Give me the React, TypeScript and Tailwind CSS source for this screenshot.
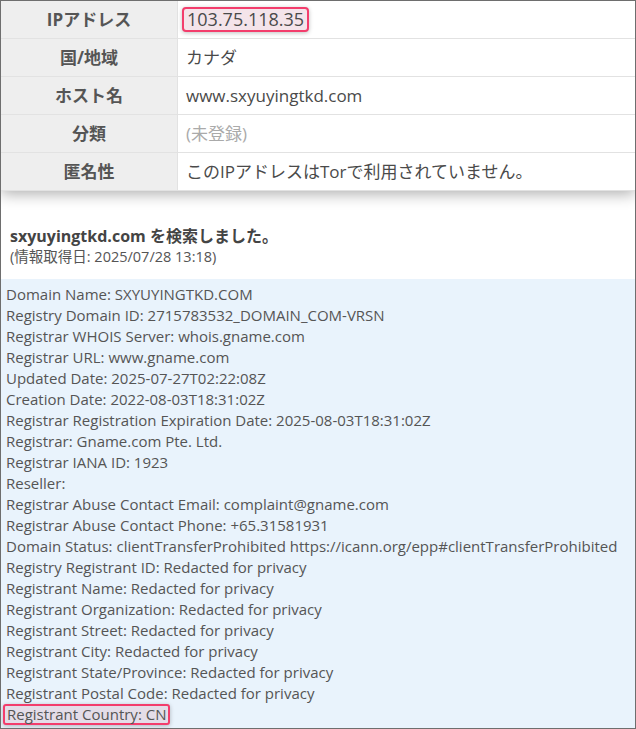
import React from "react";

const rows = [
  { label: "IPアドレス", value: "103.75.118.35", mark: true },
  { label: "国/地域", value: "カナダ" },
  { label: "ホスト名", value: "www.sxyuyingtkd.com" },
  { label: "分類", value: "(未登録)", muted: true },
  { label: "匿名性", value: "このIPアドレスはTorで利用されていません。" },
];

const whois = [
  "Domain Name: SXYUYINGTKD.COM",
  "Registry Domain ID: 2715783532_DOMAIN_COM-VRSN",
  "Registrar WHOIS Server: whois.gname.com",
  "Registrar URL: www.gname.com",
  "Updated Date: 2025-07-27T02:22:08Z",
  "Creation Date: 2022-08-03T18:31:02Z",
  "Registrar Registration Expiration Date: 2025-08-03T18:31:02Z",
  "Registrar: Gname.com Pte. Ltd.",
  "Registrar IANA ID: 1923",
  "Reseller:",
  "Registrar Abuse Contact Email: complaint@gname.com",
  "Registrar Abuse Contact Phone: +65.31581931",
  "Domain Status: clientTransferProhibited https://icann.org/epp#clientTransferProhibited",
  "Registry Registrant ID: Redacted for privacy",
  "Registrant Name: Redacted for privacy",
  "Registrant Organization: Redacted for privacy",
  "Registrant Street: Redacted for privacy",
  "Registrant City: Redacted for privacy",
  "Registrant State/Province: Redacted for privacy",
  "Registrant Postal Code: Redacted for privacy",
];

const font = "font-['Open_Sans','Noto_Sans_CJK_JP',sans-serif]";

export default function App() {
  return (
    <div className={`w-[636px] h-[729px] flex flex-col overflow-hidden border border-[#6e6e6e] bg-white text-[#4a4a4a] ${font}`}>
      {/* ── IP info table ── */}
      <div className="relative z-10 shrink-0 bg-white shadow-[0_3px_14px_rgba(0,0,0,0.32)]">
        {rows.map((r) => (
          <div key={r.label} className="flex h-[38px] border-b border-[#e2e2e2]">
            <div className="w-[177px] shrink-0 flex items-center justify-center bg-[#eeeeee] border-r border-[#e2e2e2] text-[17px] font-bold text-[#555]">
              {r.label}
            </div>
            <div className="flex items-center pl-[8px] text-[17px]">
              {r.mark ? (
                <span className="px-[3px] h-[25px] flex items-center rounded-[4px] border-2 border-[#f33d6c] bg-[#f4e4ea] text-[18px] shadow-[0_1px_4px_rgba(0,0,0,0.25)] -ml-[4px]">
                  {r.value}
                </span>
              ) : (
                <span className={r.muted ? "text-[#aaaaaa]" : ""}>{r.value}</span>
              )}
            </div>
          </div>
        ))}
      </div>

      {/* ── Search result ── */}
      <div className="shrink-0 pt-[34px] pb-[12px] pl-[9px]">
        <div className="text-[16px] font-bold text-[#444] leading-[22px]">sxyuyingtkd.com を検索しました。</div>
        <div className="text-[14.5px] text-[#555] leading-[20px]">(情報取得日: 2025/07/28 13:18)</div>
      </div>

      <div className="grow bg-[#e9f3fc] pt-[5px] pl-[5px] text-[15px] leading-[21px] text-[#555]">
        {whois.map((l) => (
          <div key={l} className="whitespace-nowrap">{l}</div>
        ))}
        <div className="flex">
          <span className="-ml-[3px] px-[2px] rounded-[3px] border-2 border-[#f33d6c] bg-[#e4dde8] shadow-[0_1px_4px_rgba(0,0,0,0.25)] leading-[17px]">
            Registrant Country: CN
          </span>
        </div>
      </div>
    </div>
  );
}
